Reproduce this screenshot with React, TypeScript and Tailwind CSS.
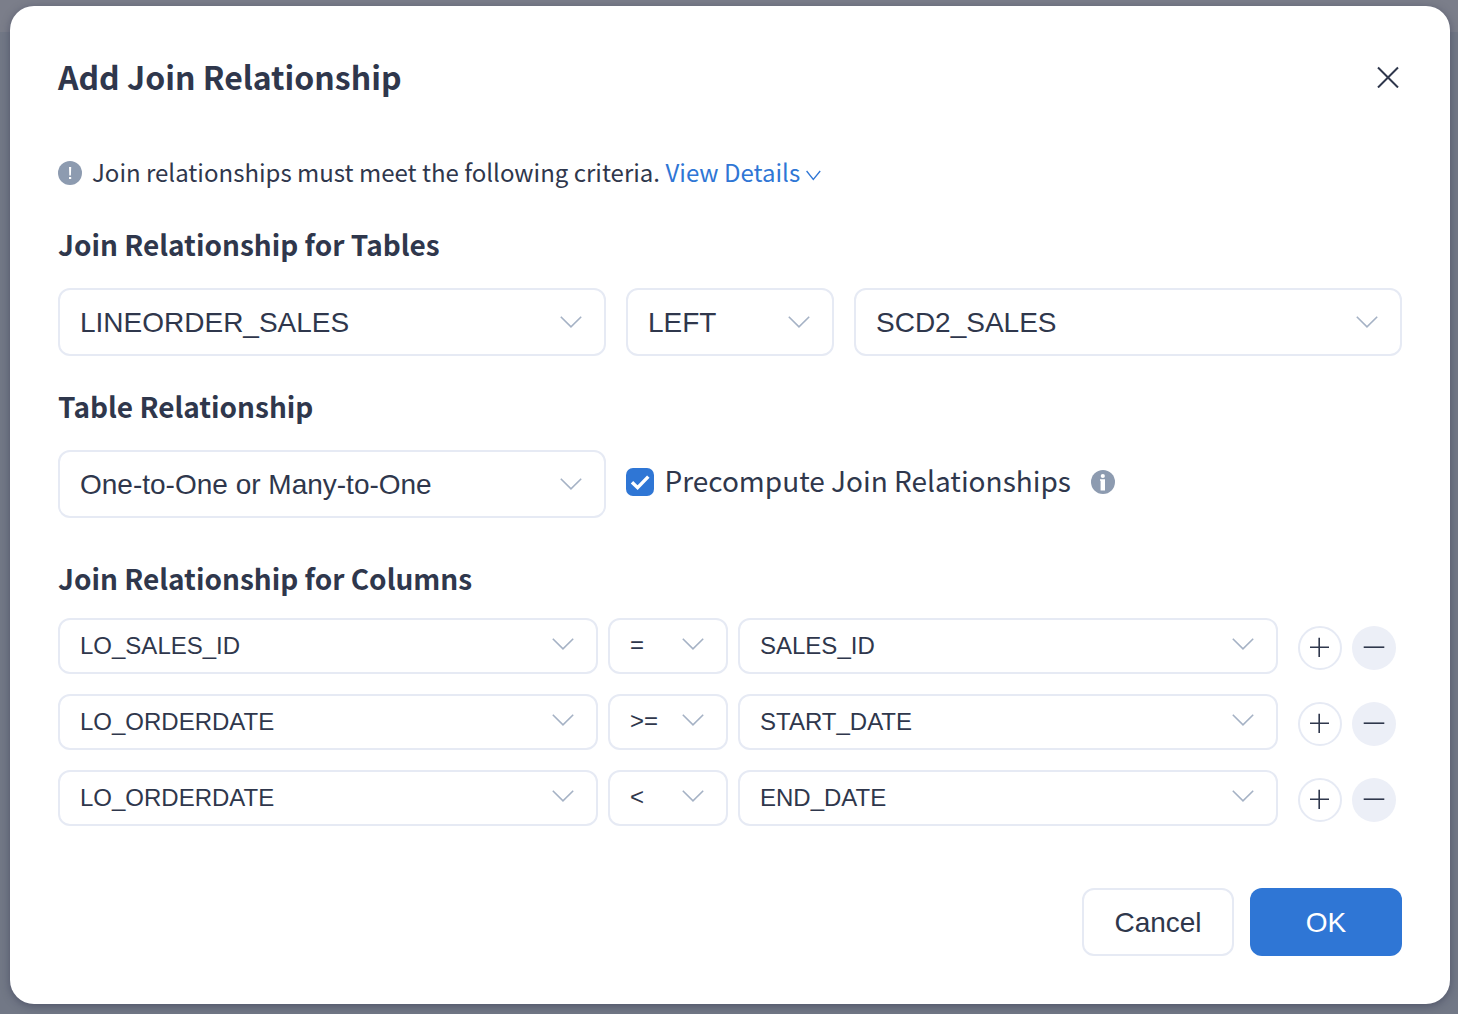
import type { ReactNode } from "react";

const cjk = "font-['Noto_Sans_CJK_SC',sans-serif]";

function Chevron({ className }: { className: string }) {
  return (
    <svg className={className} width="22" height="12" viewBox="0 0 22 12" fill="none" stroke="#a5b2c5" strokeWidth="1.6">
      <path d="M0.8 0.8 L11 10.8 L21.2 0.8" />
    </svg>
  );
}

function Select({
  label,
  width,
  small = false,
  raised = false,
}: {
  label: string;
  width: string;
  small?: boolean;
  raised?: boolean;
}) {
  return (
    <button
      className={`flex items-center justify-between rounded-xl border-2 border-[#e6eaf4] bg-white pl-5 text-left ${width} ${
        small ? "h-14 pr-[22px] text-[24px]" : "h-[68px] pr-[22px] text-[28px]"
      }`}
    >
      <span className={raised ? "pb-0.5 leading-none" : small ? "leading-none" : "pt-px leading-none"}>{label}</span>
      <Chevron className={small ? "mb-1 shrink-0" : "shrink-0"} />
    </button>
  );
}

function Heading({ children, className }: { children: ReactNode; className: string }) {
  return <h2 className={`font-['Noto_Sans_CJK_SC',sans-serif] text-[28px] leading-10 font-bold ${className}`}>{children}</h2>;
}

const conditions = [
  { left: "LO_SALES_ID", op: "=", right: "SALES_ID" },
  { left: "LO_ORDERDATE", op: ">=", right: "START_DATE" },
  { left: "LO_ORDERDATE", op: "<", right: "END_DATE" },
];

export default function App() {
  return (
    <div className="h-[1014px] w-[1458px] overflow-hidden bg-[linear-gradient(to_bottom,#7b7e8a_32px,#727886_32px)] px-[10px] pt-[6px] font-['Liberation_Sans',sans-serif] text-[#2f374c]">
      <main className="flex h-[998px] w-[1440px] flex-col rounded-[24px] bg-white px-12 shadow-[0_2px_8px_rgba(45,50,75,0.5)]">
        <header className="mt-[48px] flex h-12 items-center justify-between">
          <h1 className={`${cjk} pb-1 text-[32px] leading-[44px] font-bold whitespace-nowrap`}>Add Join Relationship</h1>
          <button aria-label="Close" className="mr-[3px] mb-[2px]">
            <svg width="22" height="22" viewBox="0 0 22 22" fill="none" stroke="#2f374c" strokeWidth="2">
              <path d="M1 1.5 L21 21.5 M21 1.5 L1 21.5" />
            </svg>
          </button>
        </header>

        <div className={`${cjk} mt-[45px] flex h-[52px] items-center whitespace-nowrap text-[24px] leading-[38px]`}>
          <svg className="mr-[10px] shrink-0" width="24" height="24" viewBox="0 0 24 24">
            <circle cx="12" cy="12" r="12" fill="#8d9bb0" />
            <path d="M11 6h2.2l-.3 8.6h-1.6z" fill="#fff" />
            <rect x="11" y="16" width="2.2" height="2" fill="#fff" />
          </svg>
          <span className="pb-0.5">Join relationships must meet the following criteria.</span>
          <button className="ml-[5.5px] flex items-center text-[#2f76d5]">
            <span className="pb-0.5">View Details</span>
            <svg className="mt-1 ml-[5.5px]" width="15" height="11" viewBox="0 0 15 11" fill="none" stroke="#2f76d5" strokeWidth="1.3">
              <path d="M0.6 1 L7.3 9.5 L14.2 1" />
            </svg>
          </button>
        </div>

        <Heading className="mt-[25px]">Join Relationship for Tables</Heading>
        <div className="mt-[24px] flex gap-5">
          <Select label="LINEORDER_SALES" width="w-[548px]" />
          <Select label="LEFT" width="w-[208px]" />
          <Select label="SCD2_SALES" width="w-[548px]" />
        </div>

        <Heading className="mt-[30px]">Table Relationship</Heading>
        <div className="mt-[24px] flex items-center gap-5">
          <Select label="One-to-One or Many-to-One" width="w-[548px]" />
          <label className={`${cjk} mb-1 flex items-center text-[28px] leading-9 whitespace-nowrap`}>
            <svg width="28" height="28" viewBox="0 0 28 28">
              <rect width="28" height="28" rx="7" fill="#2f76d5" />
              <path d="M6 14.2 L11.6 19.7 L22.3 8.6" fill="none" stroke="#fff" strokeWidth="3.4" />
            </svg>
            <span className="ml-[10.5px] pb-1">Precompute Join Relationships</span>
            <svg className="ml-5" width="24" height="24" viewBox="0 0 24 24">
              <circle cx="12" cy="12" r="12" fill="#8d9bb0" />
              <circle cx="11.8" cy="6" r="2.1" fill="#fff" />
              <path d="M9 9.2h5v11.3h-4.4V10.8H9z" fill="#fff" />
            </svg>
          </label>
        </div>

        <Heading className="mt-[40px]">Join Relationship for Columns</Heading>
        <div className="mt-[20px] flex flex-col gap-5">
          {conditions.map(({ left, op, right }) => (
            <div key={right} className="flex h-14">
              <Select label={left} width="w-[540px]" small />
              <div className="ml-[10px]">
                <Select label={op} width="w-[120px]" small raised />
              </div>
              <div className="ml-[10px]">
                <Select label={right} width="w-[540px]" small />
              </div>
              <button aria-label="Add" className="mt-2 ml-5 grid size-11 place-items-center rounded-full border-2 border-[#e6eaf4]">
                <svg width="40" height="40" viewBox="0 0 40 40" stroke="#2f374c" strokeWidth="1.6">
                  <path d="M10 19.2 H29 M19.2 9.7 V29" />
                </svg>
              </button>
              <button aria-label="Remove" className="mt-2 ml-[10px] grid size-11 place-items-center rounded-full bg-[#eceff7]">
                <svg width="44" height="44" viewBox="0 0 44 44" stroke="#2f374c" strokeWidth="1.6">
                  <path d="M11.7 21.2 H32.3" />
                </svg>
              </button>
            </div>
          ))}
        </div>

        <footer className="mt-[62px] flex justify-end gap-4 text-[28px]">
          <button className="h-[68px] w-[152px] rounded-xl border-2 border-[#e6eaf4] pt-0.5">Cancel</button>
          <button className="h-[68px] w-[152px] rounded-xl bg-[#2f76d5] pt-0.5 text-white">OK</button>
        </footer>
      </main>
    </div>
  );
}
